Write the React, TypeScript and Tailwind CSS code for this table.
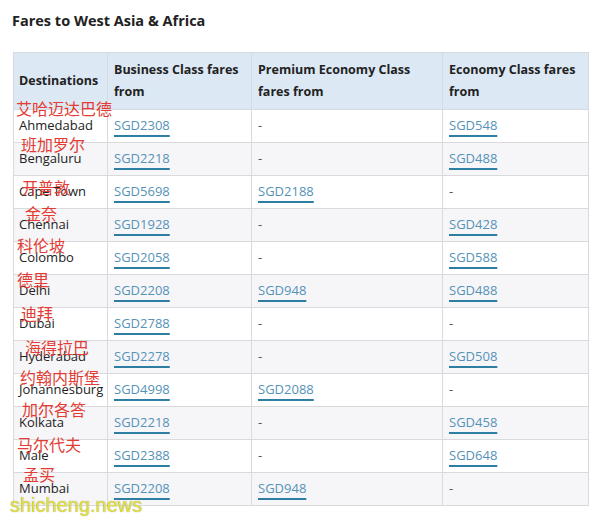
import React from "react";

const rows: [string, string, string, string][] = [
  ["Ahmedabad", "SGD2308", "-", "SGD548"],
  ["Bengaluru", "SGD2218", "-", "SGD488"],
  ["Cape Town", "SGD5698", "SGD2188", "-"],
  ["Chennai", "SGD1928", "-", "SGD428"],
  ["Colombo", "SGD2058", "-", "SGD588"],
  ["Delhi", "SGD2208", "SGD948", "SGD488"],
  ["Dubai", "SGD2788", "-", "-"],
  ["Hyderabad", "SGD2278", "-", "SGD508"],
  ["Johannesburg", "SGD4998", "SGD2088", "-"],
  ["Kolkata", "SGD2218", "-", "SGD458"],
  ["Male", "SGD2388", "-", "SGD648"],
  ["Mumbai", "SGD2208", "SGD948", "-"],
];

const notes: { t: string; x: number; y: number }[] = [
  { t: "艾哈迈达巴德", x: 16, y: 98 },
  { t: "班加罗尔", x: 21, y: 134 },
  { t: "开普敦", x: 22, y: 177 },
  { t: "金奈", x: 25, y: 203 },
  { t: "科伦坡", x: 17, y: 235 },
  { t: "德里", x: 17, y: 269 },
  { t: "迪拜", x: 21, y: 303 },
  { t: "海得拉巴", x: 25, y: 337 },
  { t: "约翰内斯堡", x: 20, y: 367 },
  { t: "加尔各答", x: 22, y: 399 },
  { t: "马尔代夫", x: 17, y: 434 },
  { t: "孟买", x: 23, y: 464 },
];

function Cell({ v }: { v: string }) {
  if (v === "-") return <span className="text-[#555]">-</span>;
  return (
    <span className="text-[#5592b8] underline decoration-[#2e7ea3] decoration-[1.5px] underline-offset-[5px]">
      {v}
    </span>
  );
}

export default function App() {
  return (
    <div className="relative w-[598px] h-[519px] bg-white overflow-hidden">
      <div className="pl-[12px] pt-[10px] h-[52px] text-[14.5px] font-bold text-[#222] [font-family:'Open_Sans',sans-serif]">
        Fares to West Asia &amp; Africa
      </div>
      <table className="ml-[13px] border-collapse text-[13px] text-[#222] [font-family:'Open_Sans',sans-serif] table-fixed w-[575px]">
        <colgroup>
          <col className="w-[94px]" />
          <col className="w-[144px]" />
          <col className="w-[191px]" />
          <col className="w-[146px]" />
        </colgroup>
        <thead>
          <tr className="bg-[#dce9f5] h-[57px]">
            <th className="border border-[#d6dbe2] text-left font-bold text-[12.5px] px-[5px] leading-[22px] align-middle">Destinations</th>
            <th className="border border-[#d6dbe2] text-left font-bold text-[12.5px] px-[6px] leading-[22px] align-middle">Business Class fares from</th>
            <th className="border border-[#d6dbe2] text-left font-bold text-[12.5px] px-[6px] leading-[22px] align-middle">Premium Economy Class fares from</th>
            <th className="border border-[#d6dbe2] text-left font-bold text-[12.5px] px-[6px] leading-[22px] align-middle">Economy Class fares from</th>
          </tr>
        </thead>
        <tbody>
          {rows.map((r, i) => (
            <tr key={r[0]} className={i % 2 === 0 ? "bg-white h-[33px]" : "bg-[#f6f6f8] h-[33px]"}>
              <td className="border border-[#d9d9de] px-[5px] whitespace-nowrap">{r[0]}</td>
              <td className="border border-[#d9d9de] px-[6px]"><Cell v={r[1]} /></td>
              <td className="border border-[#d9d9de] px-[6px]"><Cell v={r[2]} /></td>
              <td className="border border-[#d9d9de] px-[6px]"><Cell v={r[3]} /></td>
            </tr>
          ))}
        </tbody>
      </table>
      {notes.map((n) => (
        <div
          key={n.t}
          className="absolute text-[16px] leading-[20px] text-[#e23c34] [font-family:'Noto_Sans_CJK_SC',sans-serif]"
          style={{ left: n.x, top: n.y }}
        >
          {n.t}
        </div>
      ))}
      <div className="absolute left-[10px] top-[493px] text-[20px] leading-[24px] text-[#e6e23a] [font-family:'Liberation_Sans',sans-serif] [text-shadow:0_0_1px_#888]">
        shicheng.news
      </div>
    </div>
  );
}
